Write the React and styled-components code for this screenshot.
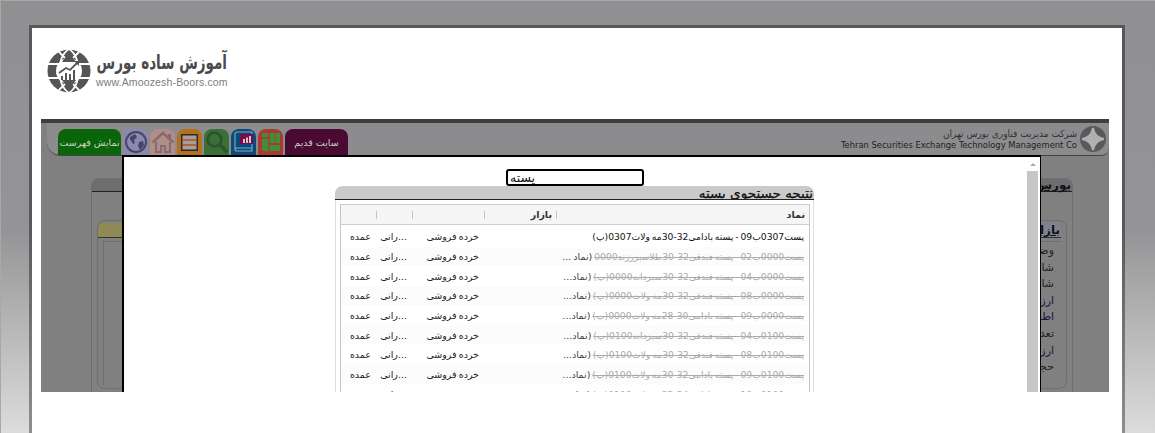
import React from "react";
import styled, { createGlobalStyle } from "styled-components";

const Global = createGlobalStyle`
  html, body { margin: 0; height: 433px; overflow: hidden; }
  body {
    background: linear-gradient(180deg, #909092 0, #949496 230px, #dcdcdc 433px);
    box-shadow: inset 1px 1px 0 #a8a8a8;
    font-family: "DejaVu Sans", sans-serif;
  }
`;
const Frame = styled.div`
  box-sizing: border-box;
  width: 1096px; height: 500px; margin: 25px 0 0 29px;
  background: #fff; border: 3px solid #58585a;
  border-image: linear-gradient(180deg, #58585a 0, #58585a 200px, #8e8e90 408px) 1;
  padding: 0 0 0 9px;
`;
const Header = styled.header`
  height: 91px; box-sizing: border-box; padding: 21px 0 0 6px;
  display: flex; align-items: flex-start; gap: 5px;
`;
const LogoText = styled.div`display: flex; flex-direction: column; align-items: flex-start;`;
const LogoTitle = styled.div`
  width: 131px; direction: rtl; font: bold 20px/26px "DejaVu Sans", sans-serif; color: #4a4a4c; white-space: nowrap;
  transform: scaleX(.675); transform-origin: right center;
`;
const LogoUrl = styled.div`margin-top: 1px; font: 10.5px/12px "Liberation Sans", sans-serif; color: #7c7c7e; letter-spacing: .15px;`;
const AppArea = styled.main`
  position: relative; width: 1068px; height: 273px; overflow: hidden;
  background: #808080; border-top: 4px solid #3e3e40; box-sizing: border-box;
`;
const TopBar = styled.div`
  margin-left: 6px; height: 33px; box-sizing: border-box; background: #8c8c8e;
  border-bottom: 1px solid #444; border-radius: 0 0 8px 14px;
  display: flex; align-items: flex-end; justify-content: space-between; padding: 0 3px 0 11px;
`;
const Tabs = styled.nav`display: flex; gap: 2px; align-self: flex-end;`;
const Tab = styled.div`
  height: 26px; width: ${p => p.$w || 25}px; box-sizing: border-box; border-radius: 8px 8px 0 0;
  background: ${p => p.$bg}; color: #c9d2c9; font-size: 9.5px;
  display: flex; align-items: center; justify-content: center; direction: rtl; white-space: nowrap;
`;
const Company = styled.div`display: flex; align-items: center; align-self: center; gap: 3px;`;
const CompanyText = styled.div`
  text-align: right; color: #222; font: 9.3px/11px "DejaVu Sans", sans-serif; font-stretch: condensed;
`;
const Fa = styled.div`direction: rtl; color: #333; font-size: 10px;`;
const Body = styled.div`padding: 22px 36px 0 50px;`;
const OuterPanel = styled.section`
  height: 300px; border-left: 1px solid #6e6e70; border-right: 1px solid #6e6e70;
  border-radius: 8px 8px 0 0;
`;
const OuterHead = styled.div`
  height: 13px; background: #6e6e70; border-bottom: 1px solid #222; border-radius: 8px 8px 0 0;
  text-align: right; direction: rtl; font: bold 12px/14px "DejaVu Sans", sans-serif; color: #111;
  padding-right: 1px; text-decoration: underline;
`;
const Inner = styled.div`
  margin: 28px 5px 0; height: 165px; border: 1px solid #6e6e70; border-radius: 8px;
  padding-top: 2px; box-sizing: content-box;
`;
const InnerHead = styled.div`
  height: 14px; margin-right: 5px; border-bottom: 1px solid #333; border-radius: 6px 6px 0 0;
  text-align: right; direction: rtl; font: bold 12px/14px "DejaVu Sans", sans-serif; color: #111; text-decoration: underline; padding-right: 1px;
  background: linear-gradient(90deg, #8f8a55 0, #8f8a55 200px, #7f8296 100%);
`;
const InnerBox = styled.div`
  margin: 3px 5px 0 5px; height: 143px; border-left: 1px solid #6e6e70; border-top: 1px solid #6e6e70;
  display: flex; flex-direction: column; align-items: flex-start; direction: rtl; padding-right: 7px;
  font-size: 11px; color: #222;
`;
const Stat = styled.div`height: 16.6px; line-height: 17px; color: ${p => p.$c || "#222"};`;
const NextHead = styled.div`margin: 3px 5px 0; height: 10px; background: #6e6e70; border-radius: 6px 6px 0 0;`;
const Modal = styled.div`
  position: absolute; left: 81px; top: 32px; width: 919px; height: 245px; box-sizing: border-box;
  background: #fff; border: 2px solid #000; border-width: 2px 1px 0 2px;
  display: flex;
`;
const ModalBody = styled.div`
  width: 903px; display: flex; flex-direction: column; align-items: center; padding-top: 12px;
`;
const Search = styled.input`
  box-sizing: border-box; width: 138px; height: 17px; border: 2px solid #000; border-radius: 3px; margin-left: -1px;
  padding: 0 2px; font: 12.5px "DejaVu Sans", sans-serif; color: #111; text-align: left; outline: none;
`;
const Results = styled.section`width: 479px; margin-left: -2px; box-sizing: border-box; border: 1px solid #ddd; border-top: 0; border-radius: 8px 8px 0 0;`;
const ResultsHead = styled.div`
  height: 13px; background: #cacaca; border-bottom: 1px solid #222; border-radius: 8px 8px 0 0; margin: 0 -1px;
  direction: rtl; font: 13.5px/15px "DejaVu Sans", sans-serif; color: #111; padding-right: 1px; white-space: nowrap; overflow: hidden;
  -webkit-text-stroke: .25px #111;
`;
const TableBox = styled.div`margin: 4px 3px 0 4px; border: 1px solid #c8c8c8; border-bottom: 0;`;
const HeadRow = styled.div`
  height: 20px; display: grid; grid-template-columns: 253px 72px 72px 36px 36px; direction: rtl; align-items: center;
  background: #f5f5f5; border-bottom: 1px solid #cfcfcf; box-sizing: border-box; margin-bottom: 2px;
`;
const HeadCell = styled.div`
  height: 8px; line-height: 8px; border-left: 1px solid #c4c4c4; padding-right: 4px;
  font-size: 9.5px; font-weight: bold; color: #333;
`;
const Row = styled.div`
  height: 19.7px; display: grid; grid-template-columns: 325px 72px 36px 36px; direction: rtl; align-items: center;
  background: ${p => p.$alt ? "#fcfcfc" : "#fff"}; white-space: nowrap;
`;
const Cell = styled.div`padding-right: 5px; font-size: 9.5px; word-spacing: -1px; color: #222; overflow: hidden;`;
const NameCell = styled(Cell)`font-size: 9.2px; color: #111;`;
const Struck = styled.span`color: #aaa; text-decoration: line-through;`;
const Note = styled.span`color: #444; font-size: 9.5px;`;
const ScrollBar = styled.div`width: 11px; display: flex; flex-direction: column; align-items: center; padding-top: 6px; gap: 5px;`;
const Arrow = styled.div`width: 0; height: 0; border: 3px solid transparent; border-top: 0; border-bottom: 3px solid #aaa;`;
const Thumb = styled.div`width: 11px; height: 300px; background: #c6c6c6;`;

const Globe = () => (
  <svg width="44" height="44" viewBox="0 0 44 44">
    <circle cx="22" cy="22" r="21.5" fill="#555557" />
    <g fill="none" stroke="#fff" strokeWidth="1.8">
      <path d="M22 0C9 8 9 36 22 44M22 0C35 8 35 36 22 44" />
      <path d="M0 15H44M0 29H44" />
      <path d="M12 3L22 13L32 3M12 41L22 31L32 41" />
    </g>
    <circle cx="22" cy="22" r="13" fill="#fff" />
    <path d="M15 13L22 3L29 13ZM15 31L22 41L29 31Z" fill="#555557" />
    <path d="M12 24L19 19L23 21L31 13" fill="none" stroke="#555557" strokeWidth="1.8" />
    <path d="M27 12H32V17Z" fill="#555557" />
    <path d="M14 27h2v4h-2zM18 24h2v7h-2zM22 25h2v6h-2zM26 21h2v10h-2z" fill="#555557" />
  </svg>
);
const GlobeIcon = () => (
  <svg width="24" height="24" viewBox="0 0 24 24">
    <circle cx="12" cy="12" r="10" fill="#8b89b3" stroke="#464660" strokeWidth="2" />
    <path d="M6 7l5-3 2 3-3 3 1 3-2 1-3-5zM15 12l4-1 1 4-4 5-2-4z" fill="#464660" />
  </svg>
);
const HomeIcon = () => (
  <svg width="24" height="22" viewBox="0 0 24 22">
    <path d="M1.500 11.500L12 2l10.500 9.500" fill="none" stroke="#8b6a6a" strokeWidth="2.500" />
    <path d="M5 11v10h5v-6h4v6h5V11" fill="none" stroke="#8b6a6a" strokeWidth="2" />
    <path d="M17 3h3v5h-3z" fill="#8b6a6a" />
  </svg>
);
const TableIcon = () => (
  <svg width="17" height="17" viewBox="0 0 17 17">
    <rect x=".75" y=".75" width="15.500" height="15.500" fill="#a8a098" stroke="#2a2a2a" strokeWidth="1.500" />
    <path d="M1 6H16M1 11H16" stroke="#a8502e" strokeWidth="1.400" />
  </svg>
);
const SearchIcon = () => (
  <svg width="24" height="24" viewBox="0 0 24 24">
    <circle cx="9.500" cy="9.500" r="6.800" fill="none" stroke="#2a552a" strokeWidth="2.800" />
    <path d="M14.500 14.500L22 22" stroke="#2a552a" strokeWidth="3.200" />
  </svg>
);
const BookIcon = () => (
  <svg width="22" height="22" viewBox="0 0 22 22">
    <path d="M2 18V3a2 2 0 0 1 2-2h15v17M2 18a2 2 0 0 0 2 2h15v-3H4a2 2 0 0 0-2 1z" fill="none" stroke="#8aa8c0" strokeWidth="1.100" />
    <rect x="7" y="3" width="13" height="10" fill="#7d0a4a" />
    <path d="M10 8h2v4h-2zM13 6.500h2V12h-2zM16 5h2v7h-2z" fill="#c8c8c8" />
  </svg>
);
const GridIcon = () => (
  <svg width="18" height="18" viewBox="0 0 18 18">
    <path d="M0 0h6.500v4H0zM0 6h6.500v12H0zM8 0h4.500v10H8zM13.500 0H18v10h-4.500zM8 12h10v6H8z" fill="#3f8f3a" />
  </svg>
);
const Star = () => (
  <svg width="26" height="26" viewBox="0 0 26 26">
    <circle cx="13" cy="13" r="13" fill="#59595b" />
    <path d="M13 2Q14.500 11.500 24 13Q14.500 14.500 13 24Q11.500 14.500 2 13Q11.500 11.500 13 2Z" fill="#b0b0b0" stroke="#b0b0b0" strokeWidth="2" />
  </svg>
);

const rows = [
  ["پست0000ب02 - پسته فندقی32-30طلاسبزرزند0000", "(نماد ..."],
  ["پست0000ب04 - پسته فندقی32-30سبزدانه0000(پ)", "(نماد..."],
  ["پست0000ب08 - پسته فندقی32-30مه ولات0000(پ)", "(نماد..."],
  ["پست0000ب09 - پسته بادامی30-28مه ولات0000(پ)", "(نماد..."],
  ["پست0100ب04 - پسته فندقی32-30سبزدانه0100(پ)", "(نماد..."],
  ["پست0100ب08 - پسته فندقی32-30مه ولات0100(پ)", "(نماد..."],
  ["پست0100ب09 - پسته بادامی32-30مه ولات0100(پ)", "(نماد..."],
  ["پست0100ب10 - پسته بادامی34-32مه ولات0100(پ)", "(نماد..."],
];
const stats = [["وضعیت"], ["شاخص"], ["شاخص"], ["ارزش", "#1a1040"], ["اطلاعات", "#1a1040"], ["تعداد"], ["ارزش", "#1a1040"], ["حجم"]];

const Tail = () => (
  <>
    <Cell>خرده فروشی</Cell>
    <Cell>...رانی</Cell>
    <Cell>عمده</Cell>
  </>
);

export default function App() {
  return (
    <>
      <Global />
      <Frame>
        <Header>
          <Globe />
          <LogoText>
            <LogoTitle>آموزش ساده بورس</LogoTitle>
            <LogoUrl>www.Amoozesh-Boors.com</LogoUrl>
          </LogoText>
        </Header>
        <AppArea>
          <TopBar>
            <Tabs>
              <Tab $w={63} $bg="#0a640a">نمایش فهرست</Tab>
              <Tab $bg="#8b89b3"><GlobeIcon /></Tab>
              <Tab $bg="#b08c8c"><HomeIcon /></Tab>
              <Tab $bg="#b5701e"><TableIcon /></Tab>
              <Tab $bg="#3a7038"><SearchIcon /></Tab>
              <Tab $bg="#0b4a7a"><BookIcon /></Tab>
              <Tab $bg="#a83a32"><GridIcon /></Tab>
              <Tab $w={63} $bg="#4a0a32">سایت قدیم</Tab>
            </Tabs>
            <Company>
              <CompanyText>
                <Fa>شرکت مدیریت فناوری بورس تهران</Fa>
                <div>Tehran Securities Exchange Technology Management Co</div>
              </CompanyText>
              <Star />
            </Company>
          </TopBar>
          <Body>
            <OuterPanel>
              <OuterHead>بورس</OuterHead>
              <Inner>
                <InnerHead>بازار</InnerHead>
                <InnerBox>
                  {stats.map(([t, c], i) => <Stat key={i} $c={c}>{t}</Stat>)}
                </InnerBox>
              </Inner>
              <NextHead />
            </OuterPanel>
          </Body>
          <Modal>
            <ModalBody>
              <Search readOnly value="پسته" />
              <Results>
                <ResultsHead>نتیجه جستجوی پسته</ResultsHead>
                <TableBox>
                  <HeadRow>
                    <HeadCell>نماد</HeadCell>
                    <HeadCell>بازار</HeadCell>
                    <HeadCell />
                    <HeadCell />
                    <HeadCell />
                  </HeadRow>
                  <Row>
                    <NameCell>پست0307ب09 - پسته بادامی32-30مه ولات0307(پ)</NameCell>
                    <Tail />
                  </Row>
                  {rows.map(([name, note], i) => (
                    <Row key={i} $alt={i % 2 === 0}>
                      <NameCell><Struck>{name}</Struck> <Note>{note}</Note></NameCell>
                      <Tail />
                    </Row>
                  ))}
                </TableBox>
              </Results>
            </ModalBody>
            <ScrollBar>
              <Arrow />
              <Thumb />
            </ScrollBar>
          </Modal>
        </AppArea>
      </Frame>
    </>
  );
}
